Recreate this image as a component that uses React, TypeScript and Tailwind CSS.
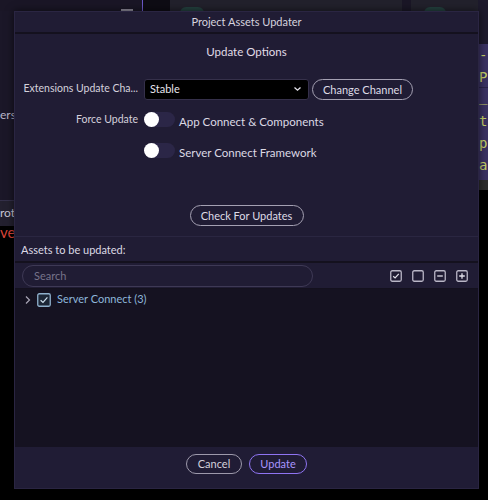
import React from "react";

const font = { fontFamily: "Lato, 'Noto Sans', sans-serif" };

function Toggle() {
  return (
    <div className="relative w-[31px] h-[15px] rounded-full bg-[#2b2647] shrink-0">
      <div className="absolute left-0 top-0 w-[15px] h-[15px] rounded-full bg-white" />
    </div>
  );
}

function Box({ kind }: { kind: "check" | "empty" | "minus" | "plus" }) {
  return (
    <svg width="12" height="12" viewBox="0 0 12 12" className="shrink-0">
      <rect x="0.75" y="0.75" width="10.5" height="10.5" rx="1.5" fill="none" stroke="#b9b6c6" strokeWidth="1.3" />
      {kind === "check" && <path d="M3.2 6.2 L5.1 8 L8.8 3.8" fill="none" stroke="#e2e0ea" strokeWidth="1.2" />}
      {kind === "minus" && <path d="M3.2 6 H8.8" stroke="#e2e0ea" strokeWidth="1.3" />}
      {kind === "plus" && <path d="M3.2 6 H8.8 M6 3.2 V8.8" stroke="#e2e0ea" strokeWidth="1.3" />}
    </svg>
  );
}

export default function App() {
  return (
    <div className="relative w-[488px] h-[500px] overflow-hidden bg-black" style={font}>
      {/* background app */}
      <div className="absolute left-0 top-0 w-[14px] h-[200px] bg-[#1b1728]">
        <div className="absolute left-0 top-[109px] text-[12px] text-[#b9b5c8] leading-none">ers</div>
      </div>
      <div className="absolute left-0 top-[200px] w-[14px] h-[26px] bg-[#23202f] border-t border-[#34304a]">
        <div className="absolute left-0 top-[6px] text-[12px] text-[#c9c6d4] leading-none">rot</div>
      </div>
      <div className="absolute left-0 top-[225px] text-[15px] text-[#d9443a] leading-none">vel</div>
      <div className="absolute left-0 top-0 w-[488px] h-[11px] bg-[#1a1626]" />
      <div className="absolute left-[121px] top-[9px] w-[12px] h-[2px] bg-[#8d8a99]" />
      <div className="absolute left-[142px] top-0 w-[1px] h-[11px] bg-[#6b58c8]" />
      <div className="absolute left-[143px] top-0 w-[27px] h-[11px] bg-[#0e0c14]" />
      <div className="absolute left-[170px] top-0 w-[232px] h-[11px] bg-[#22212c]" />
      <div className="absolute left-[180px] top-[7px] w-[24px] h-[6px] rounded-t-full bg-[#23403e]" />
      <div className="absolute left-[411px] top-0 w-[77px] h-[11px] bg-[#22212c]" />
      <div className="absolute left-[424px] top-[7px] w-[22px] h-[6px] rounded-t-full bg-[#23403e]" />
      <div className="absolute left-[478px] top-0 w-[10px] h-[180px] bg-[#1d1a2c]" />
      <div
        className="absolute left-[478px] top-[44px] w-[10px] h-[136px] bg-[#3a3262] flex flex-col text-[14px] leading-[22px] text-[#c5d06a] pl-[1px] overflow-hidden"
        style={{ fontFamily: "'DejaVu Sans Mono', monospace" }}
      >
        <div className="h-[22px] whitespace-nowrap">-</div>
        <div className="h-[22px] whitespace-nowrap border-b border-[#2a2448]">P</div>
        <div className="h-[22px] whitespace-nowrap leading-[16px]">_</div>
        <div className="h-[22px] whitespace-nowrap">t</div>
        <div className="h-[22px] whitespace-nowrap">p</div>
        <div className="h-[22px] whitespace-nowrap">a</div>
      </div>
      <div className="absolute left-[478px] top-[180px] w-[10px] h-[10px] bg-[#2b2b2b]" />

      {/* dialog */}
      <div className="absolute left-[14px] top-[11px] w-[465px] h-[478px] flex flex-col bg-[#201c34] border border-[#2a2542] shadow-[0_0_8px_rgba(0,0,0,0.6)]">
        <div className="h-[22px] flex items-center justify-center pt-[1px] text-[11px] text-[#d6d3de] border-b-2 border-[#14111e] shrink-0">
          Project Assets Updater
        </div>
        <div className="flex flex-col flex-none h-[202px]">
          <div className="h-[28px] flex items-end justify-center text-[11.5px] text-[#e0dde8] pb-[2px]">Update Options</div>
          <div className="flex items-center mt-[16px] h-[22px]">
            <div className="w-[129px] pl-[6px] pr-[6px] text-right text-[10.5px] text-[#d4d1dc] whitespace-nowrap overflow-hidden">Extensions Update Cha...</div>
            <div className="w-[165px] h-[21px] bg-black border border-[#35304a] rounded-[3px] flex items-center justify-between pl-[5px] pr-[6px] text-[11px] text-[#e6e4ec]">
              <span>Stable</span>
              <svg width="9" height="6" viewBox="0 0 9 6"><path d="M1.5 1.5 L4.5 4.2 L7.5 1.5" fill="none" stroke="#e6e4ec" strokeWidth="1.3" /></svg>
            </div>
            <button className="ml-[3px] h-[21px] w-[101px] rounded-full border border-[#a4a0b2] text-[11px] text-[#dedbe6] leading-none">Change Channel</button>
          </div>
          <div className="flex items-center mt-[11px] h-[16px]">
            <div className="w-[129px] pr-[6px] pt-[2px] text-right text-[10.5px] text-[#d4d1dc]">Force Update</div>
            <Toggle />
            <span className="ml-[4px] mt-[6px] text-[11.5px] text-[#dcd9e4]">App Connect &amp; Components</span>
          </div>
          <div className="flex items-center mt-[15px] h-[16px]">
            <div className="w-[129px]" />
            <Toggle />
            <span className="ml-[4px] mt-[6px] text-[11.5px] text-[#dcd9e4]">Server Connect Framework</span>
          </div>
          <div className="flex justify-center mt-[47px]">
            <button className="h-[21px] w-[114px] rounded-full border border-[#a4a0b2] text-[11px] text-[#dedbe6] leading-none">Check For Updates</button>
          </div>
        </div>
        <div className="h-[27px] flex items-center pt-[2px] px-[6px] text-[11px] text-[#dcd9e4] border-t border-[#2a2641] border-b-2 border-b-[#14111e] shrink-0">
          Assets to be updated:
        </div>
        <div className="h-[26px] flex items-center px-[7px] border-b border-[#14111e] shrink-0">
          <div className="w-[291px] h-[22px] rounded-full border border-[#3e3955] flex items-center pl-[11px] pt-[2px] text-[11px] text-[#77738a]">Search</div>
          <div className="ml-auto flex items-center gap-[10px] pr-[3px]">
            <Box kind="check" />
            <Box kind="empty" />
            <Box kind="minus" />
            <Box kind="plus" />
          </div>
        </div>
        <div className="flex-1 bg-[#151221]">
          <div className="flex items-center h-[21px] pl-[9px]">
            <svg width="8" height="10" viewBox="0 0 8 10"><path d="M2 1.5 L5.5 5 L2 8.5" fill="none" stroke="#a9a6b6" strokeWidth="1.2" /></svg>
            <svg width="14" height="14" viewBox="0 0 14 14" className="ml-[5px]">
              <rect x="0.75" y="0.75" width="12.5" height="12.5" rx="1.5" fill="#1c2636" stroke="#8fb0cc" strokeWidth="1.3" />
              <path d="M3.6 7.2 L6 9.4 L10.4 4.4" fill="none" stroke="#cfe0ee" strokeWidth="1.2" />
            </svg>
            <span className="ml-[6px] text-[11px] text-[#8db6da]">Server Connect (3)</span>
          </div>
        </div>
        <div className="h-[41px] flex items-center justify-center gap-[7px] bg-[#201c35] shrink-0 pb-[8px]">
          <button className="h-[20px] w-[56px] rounded-full border border-[#9d99ab] text-[11px] text-[#d4d1dc] leading-none">Cancel</button>
          <button className="h-[20px] w-[58px] rounded-full border border-[#8f74f2] text-[11px] text-[#a995ff] leading-none">Update</button>
        </div>
      </div>
    </div>
  );
}
